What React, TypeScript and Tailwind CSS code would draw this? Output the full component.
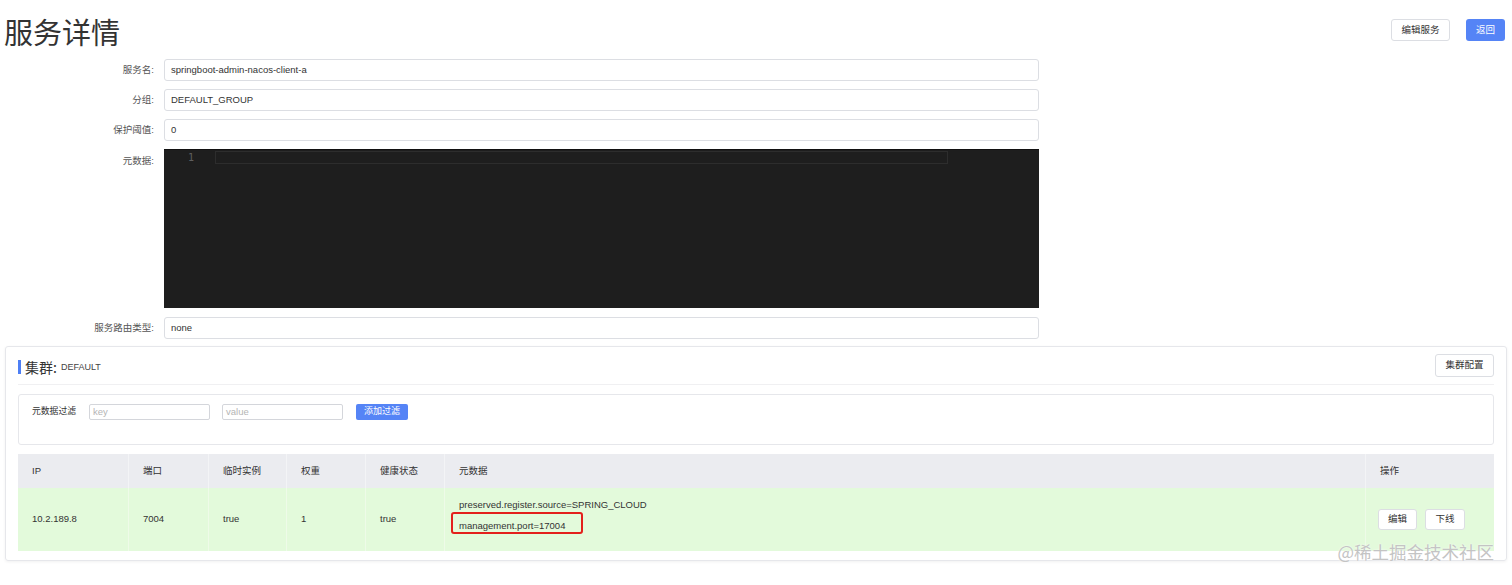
import React from "react";

const FONT = { fontFamily: '"Liberation Sans", "Noto Sans CJK SC", sans-serif' };
const CJK = { fontFamily: '"Noto Sans CJK SC", "Liberation Sans", sans-serif' };

function FormRow({ label, children, tall }: { label: string; children: React.ReactNode; tall?: boolean }) {
  return (
    <div className="flex items-start">
      <div className={`w-[154px] text-right text-[9.5px] text-[#555] leading-[22px] ${tall ? "pt-[1px]" : ""}`}>{label}</div>
      <div className="ml-[10px]">{children}</div>
    </div>
  );
}

function TextInput({ value }: { value: string }) {
  return (
    <div className="w-[875px] h-[22px] border border-[#dcdee3] rounded-[3px] bg-white px-[6px] flex items-center text-[9.5px] text-[#333]">
      {value}
    </div>
  );
}

const cols = [
  { w: "w-[111px]", label: "IP" },
  { w: "w-[80px]", label: "端口" },
  { w: "w-[78px]", label: "临时实例" },
  { w: "w-[79px]", label: "权重" },
  { w: "w-[79px]", label: "健康状态" },
  { w: "w-[921px]", label: "元数据" },
  { w: "w-[126px]", label: "操作" },
];

export default function App() {
  return (
    <div className="relative w-[1512px] h-[585px] overflow-hidden bg-white text-[#333]" style={FONT}>
      {/* header */}
      <div className="flex justify-between items-start h-[59px]">
        <h1 className="pl-[4px] pt-[13px] text-[29px] leading-[36px] text-[#333] font-normal" style={CJK}>服务详情</h1>
        <div className="flex gap-[16px] pt-[19px] pr-[7px]">
          <button className="w-[59px] h-[22px] border border-[#dcdee3] rounded-[3px] bg-white text-[9.5px] text-[#333]">编辑服务</button>
          <button className="w-[39px] h-[22px] rounded-[3px] bg-[#5584f6] text-[9.5px] text-white">返回</button>
        </div>
      </div>

      {/* form */}
      <div className="flex flex-col gap-[8px]">
        <FormRow label="服务名:">
          <TextInput value="springboot-admin-nacos-client-a" />
        </FormRow>
        <FormRow label="分组:">
          <TextInput value="DEFAULT_GROUP" />
        </FormRow>
        <FormRow label="保护阈值:">
          <TextInput value="0" />
        </FormRow>
        <FormRow label="元数据:" tall>
          <div className="relative w-[875px] h-[159px] bg-[#1e1e1e] border-t border-[#111]">
            <div className="flex pt-[1px]">
              <div className="w-[50px] text-right pr-[20px] text-[10px] leading-[13px] text-[#5f5f5f]" style={{ fontFamily: '"DejaVu Sans Mono", monospace' }}>1</div>
              <div className="ml-[1px] w-[733px] h-[13px] border border-[#2d2d2d]" />
            </div>
          </div>
        </FormRow>
        <div className="mt-[1px]">
          <FormRow label="服务路由类型:">
            <TextInput value="none" />
          </FormRow>
        </div>
      </div>

      {/* cluster card */}
      <div className="mx-[5px] mt-[7px] border border-[#e6e7eb] rounded-[3px] shadow-[0_1px_3px_rgba(0,0,0,0.06)] px-[12px] pb-[9px]">
        <div className="h-[38px] flex items-center justify-between border-b border-[#f0f0f2]">
          <div className="flex items-center mt-[2px]">
            <div className="w-[3px] h-[14px] bg-[#4d7ff5]" />
            <span className="ml-[4px] text-[14px] leading-[18px] text-[#333]" style={CJK}>集群:</span>
            <span className="ml-[4px] mt-[2px] text-[9px] text-[#444]">DEFAULT</span>
          </div>
          <button className="w-[59px] h-[23px] border border-[#dcdee3] rounded-[3px] bg-white text-[9.5px] text-[#333] mt-[-1px]">集群配置</button>
        </div>

        <div className="mt-[9px] h-[51px] border border-[#e6e7eb] rounded-[3px] px-[13px] pt-[9px]">
          <div className="flex items-center h-[16px]">
            <span className="w-[44px] shrink-0 whitespace-nowrap text-[8.8px] text-[#333]">元数据过滤</span>
            <div className="ml-[13px] w-[121px] h-[16px] border border-[#d4d6db] rounded-[2px] px-[3px] flex items-center text-[9.5px] text-[#b5b5b5]">key</div>
            <div className="ml-[12px] w-[121px] h-[16px] border border-[#d4d6db] rounded-[2px] px-[3px] flex items-center text-[9.5px] text-[#b5b5b5]">value</div>
            <button className="ml-[13px] w-[52px] h-[16px] rounded-[2px] bg-[#5584f6] text-[9px] text-white">添加过滤</button>
          </div>
        </div>

        <div className="mt-[9px]">
          <div className="flex h-[34px] bg-[#ebecf0]">
            {cols.map((c, i) => (
              <div
                key={c.label}
                className={`${c.w} flex items-center pl-[14px] text-[9.5px] text-[#333] ${i < cols.length - 1 ? "border-r border-[#f3f4f6]" : ""}`}
              >
                {c.label}
              </div>
            ))}
          </div>
          <div className="flex h-[63px] bg-[#e3fadb] text-[9.5px] text-[#333]">
            <div className="w-[111px] flex items-center pl-[14px] border-r border-[#eefbe8]">10.2.189.8</div>
            <div className="w-[80px] flex items-center pl-[14px] border-r border-[#eefbe8]">7004</div>
            <div className="w-[78px] flex items-center pl-[14px] border-r border-[#eefbe8]">true</div>
            <div className="w-[79px] flex items-center pl-[14px] border-r border-[#eefbe8]">1</div>
            <div className="w-[79px] flex items-center pl-[14px] border-r border-[#eefbe8]">true</div>
            <div className="w-[921px] pl-[14px] pt-[6px] border-r border-[#eefbe8]">
              <div className="leading-[21px]">preserved.register.source=SPRING_CLOUD</div>
              <div className="relative leading-[21px]">
                management.port=17004
                <div className="absolute left-[-8px] top-[-3px] w-[132px] h-[22px] border-2 border-[#e3201c] rounded-[3px]" />
              </div>
            </div>
            <div className="w-[126px] flex items-center pl-[12px] gap-[8px]">
              <button className="w-[39px] h-[21px] border border-[#dcdee3] rounded-[3px] bg-white text-[9.5px] text-[#333]">编辑</button>
              <button className="w-[40px] h-[21px] border border-[#dcdee3] rounded-[3px] bg-white text-[9.5px] text-[#333]">下线</button>
            </div>
          </div>
        </div>
      </div>

      {/* watermark */}
      <div
        className="absolute right-[18px] top-[540px] text-[17.5px] leading-[24px] text-[#c4c4c4]"
        style={{ ...CJK, textShadow: "0 0 2px #fff" }}
      >
        @稀土掘金技术社区
      </div>
    </div>
  );
}
